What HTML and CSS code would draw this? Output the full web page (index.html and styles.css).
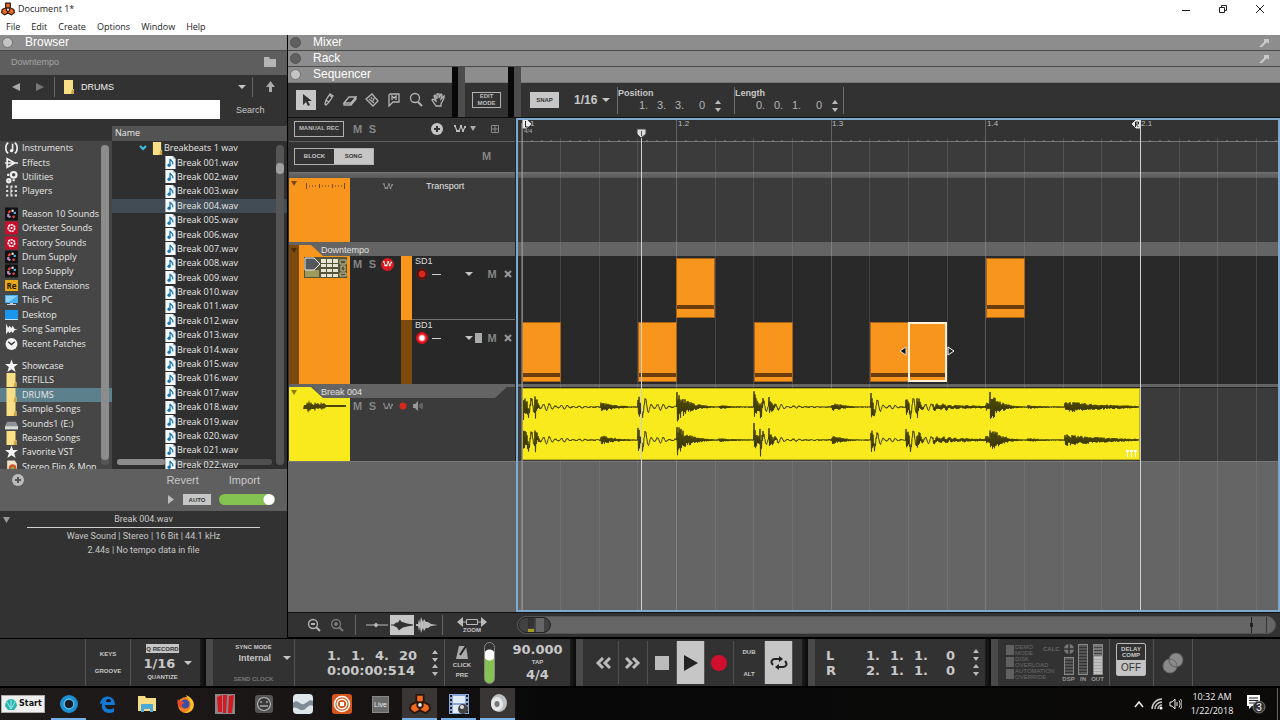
FILE: index.html
```html
<!DOCTYPE html>
<html lang="en">
<head>
<meta charset="utf-8">
<title>Document 1*</title>
<link rel="stylesheet" href="styles.css">
</head>
<body>
<svg class="defs" aria-hidden="true">
  <symbol id="logo" viewBox="0 0 24 24"><g fill="#f26a22" stroke="#2a1710" stroke-width="2"><path d="M8 2h8v7l-4 3-4-3z"/><path d="M2 13l6-3 5 4-1 5-6 3-5-4z"/><path d="M22 13l-6-3-5 4 1 5 6 3 5-4z"/></g><circle cx="12" cy="13" r="3" fill="#eee" stroke="#2a1710" stroke-width="2"/></symbol>
  <symbol id="folder" viewBox="0 0 12 14"><path d="M1 0h9v9h1v5H1z" fill="#f8df86"/><path d="M9 9l2 1v4H8z" fill="#c9a545"/></symbol>
  <symbol id="wav" viewBox="0 0 11 14"><path d="M0 0h8l3 3v11H0z" fill="#f4f8fb"/><path d="M8 0v3h3" fill="#a9bfd0"/><path d="M5 3c0 2 4 2 3 6M5 3v7" fill="none" stroke="#1476b8" stroke-width="1.4"/><circle cx="4" cy="10" r="1.8" fill="#1476b8"/></symbol>
  <symbol id="inst" viewBox="0 0 12 12"><path d="M3 1C0 3 0 9 3 11M9 1c3 2 3 8 0 10M7 2v7" fill="none" stroke="#eee" stroke-width="1.5"/><circle cx="6" cy="8.500" r="1.500" fill="#eee"/></symbol>
  <symbol id="fx" viewBox="0 0 12 12"><path d="M2 2l7 4-7 4zM0 6h12" fill="none" stroke="#eee" stroke-width="1.600"/></symbol>
  <symbol id="util" viewBox="0 0 12 12"><g fill="none" stroke="#eee" stroke-width="2"><circle cx="8" cy="4" r="2.600"/><circle cx="3.500" cy="9.500" r="1.500"/><path d="M2 4h2M7 9h2"/></g></symbol>
  <symbol id="play4" viewBox="0 0 12 12"><path d="M1 1h2v2H1zM5 1h2v2H5zM9 1h2v2H9zM1 5h2v2H1zM5 5h2v2H5zM9 5h2v2H9zM1 9h2v2H1zM5 9h2v2H5zM9 9h2v2H9zM5 3h1v8H5z" fill="#ddd"/></symbol>
  <symbol id="rsn" viewBox="0 0 12 12"><rect width="12" height="12" fill="#111"/><g fill="none" stroke-width="2"><path d="M3 5l2-2" stroke="#e8443c"/><path d="M6 3h2" stroke="#eee"/><path d="M9 4v2" stroke="#5bb4e8"/><path d="M9 8L7 9" stroke="#e8443c"/><path d="M3 6v2l2 1" stroke="#b98cd0"/></g></symbol>
  <symbol id="red" viewBox="0 0 12 12"><rect width="12" height="12" fill="#c8102e"/><circle cx="6" cy="6" r="3" fill="none" stroke="#fff" stroke-width="1.500" stroke-dasharray="2 .6"/><circle cx="6" cy="6" r="1" fill="#fff"/></symbol>
  <symbol id="pc" viewBox="0 0 13 12"><path d="M0 1h13v8H0z" fill="#43b0ef"/><path d="M1 2h11L4 8H1z" fill="#8cd2fa"/><path d="M5 9h3v1h3v1H2v-1h3z" fill="#ccd"/></symbol>
  <symbol id="desk" viewBox="0 0 13 12"><path d="M0 1h13v10H0z" fill="#1a96f0"/><path d="M0 10h13v1H0z" fill="#bfe3ff"/></symbol>
  <symbol id="smp" viewBox="0 0 12 12"><path d="M1 1l2 4 1-2 2 2 1-2 2 3 3 0-3 1-2 3-1-2-2 2-1-2-2 3z" fill="#eee"/></symbol>
  <symbol id="clk" viewBox="0 0 12 12"><circle cx="6" cy="6" r="5.500" fill="#f2f2f2"/><path d="M3 4l3 2.500L9 4" fill="none" stroke="#333" stroke-width="1.300"/></symbol>
  <symbol id="star" viewBox="0 0 12 12"><path d="M6 0l1.500 4.200H12L8.400 7l1.400 4.600L6 9l-3.800 2.600L3.600 7 0 4.200h4.500z" fill="#f4f4f4"/></symbol>
  <symbol id="drive" viewBox="0 0 12 12"><path d="M2 4h8l2 4H0z" fill="#8f9296"/><path d="M0 8h12v3H0z" fill="#d8dadc"/></symbol>
  <symbol id="doc" viewBox="0 0 12 12"><path d="M2 0h7l2 3v9H2z" fill="#f0e4c8"/><circle cx="7" cy="7" r="3.500" fill="#d4552c"/><circle cx="7" cy="7" r="1.500" fill="#7cb342"/></symbol>
  <symbol id="auto" viewBox="0 0 12 10"><path d="M1 2l2 5M5 7l2-5 2 5 2-4" fill="none" stroke="currentColor" stroke-width="1.200"/><path d="M0 1h2v2H0zM2 6h2v2H2zM4 6h2v2H4zM6 1h2v2H6zM8 6h2v2H8zM10 2h2v2h-2z" fill="currentColor"/></symbol>
  <symbol id="ud" viewBox="0 0 8 14"><path d="M4 1l3 4H1zM4 13l3-4H1z" fill="#bbb"/></symbol>
  <symbol id="pop" viewBox="0 0 12 10"><path d="M6 1h5v5L9 4 4 9H1l5-5z" fill="#c9c9c9"/></symbol>
</svg>

<header class="titlebar">
  <div class="title"><svg width="14" height="14"><use href="#logo"/></svg><span>Document 1*</span></div>
  <div class="winctl">
    <button aria-label="Minimize"><svg width="10" height="10"><path d="M1 6.500h8" stroke="#222"/></svg></button>
    <button aria-label="Restore"><svg width="10" height="10" fill="none" stroke="#222"><path d="M1.500 3.500h5v5h-5zM3.500 3V1.500h5v5H7"/></svg></button>
    <button aria-label="Close"><svg width="10" height="10"><path d="M1 1l8 8M9 1L1 9" stroke="#222"/></svg></button>
  </div>
</header>
<nav class="menu"><button>File</button><button>Edit</button><button>Create</button><button>Options</button><button>Window</button><button>Help</button></nav>

<main class="work">
  <aside class="browser">
    <div class="panelhead"><i class="knob on"></i><h2>Browser</h2></div>
    <div class="crumb"><span>Downtempo</span><svg width="14" height="12"><path d="M1 1h5l1 2h6v8H1z" fill="#b5b5b5"/></svg></div>
    <div class="nav">
      <button aria-label="Back"><svg width="9" height="10"><path d="M8 1v8L0 5z" fill="#aaa"/></svg></button>
      <button aria-label="Forward"><svg width="9" height="10"><path d="M1 1v8l8-4z" fill="#777"/></svg></button>
      <i class="vr"></i>
      <svg width="12" height="14"><use href="#folder"/></svg>
      <div class="pick grow"><select aria-label="Folder"><option>DRUMS</option></select></div>
      <i class="vr"></i>
      <button aria-label="Up one level"><svg width="9" height="12"><path d="M4.500 0L9 6H6v5H3V6H0z" fill="#aaa"/></svg></button>
    </div>
    <div class="search"><input id="q" type="text"><label for="q">Search</label></div>
    <div class="lists">
      <div class="places">
        <div class="placelist">
          <ul class="g4"><li><svg><use href="#inst"/></svg>Instruments</li><li><svg><use href="#fx"/></svg>Effects</li><li><svg><use href="#util"/></svg>Utilities</li><li><svg><use href="#play4"/></svg>Players</li></ul>
          <ul class="g10"><li><svg><use href="#rsn"/></svg>Reason 10 Sounds</li><li><svg><use href="#red"/></svg>Orkester Sounds</li><li><svg><use href="#red"/></svg>Factory Sounds</li><li><svg><use href="#rsn"/></svg>Drum Supply</li><li><svg><use href="#rsn"/></svg>Loop Supply</li><li><b class="re">Re</b>Rack Extensions</li><li><svg><use href="#pc"/></svg>This PC</li><li><svg><use href="#desk"/></svg>Desktop</li><li><svg><use href="#smp"/></svg>Song Samples</li><li><svg><use href="#clk"/></svg>Recent Patches</li></ul>
          <ul class="g8"><li><svg><use href="#star"/></svg>Showcase</li><li><svg><use href="#folder"/></svg>REFILLS</li><li class="sel"><svg><use href="#folder"/></svg>DRUMS</li><li><svg><use href="#folder"/></svg>Sample Songs</li><li><svg><use href="#drive"/></svg>Sounds1 (E:)</li><li><svg><use href="#folder"/></svg>Reason Songs</li><li><svg><use href="#star"/></svg>Favorite VST</li><li><svg><use href="#doc"/></svg>Stereo Flip &amp; Mon</li></ul>
        </div>
        <div class="vbar"><i class="full"></i></div>
      </div>
      <div class="files">
        <div class="colhead">Name</div>
        <div class="filebody">
          <ul class="filelist" id="files">
            <li class="dir"><svg class="chev" width="8" height="6"><path d="M1 1l3 3 3-3" fill="none" stroke="#3cc1e6" stroke-width="2"/></svg><svg><use href="#folder"/></svg>Breakbeats 1 wav</li>
          </ul>
          <div class="vbar"><i class="short"></i></div>
          <div class="hbar"><i></i></div>
        </div>
      </div>
    </div>
    <div class="audition">
      <div class="arow"><button class="plus" aria-label="Add"><svg width="12" height="12"><circle cx="6" cy="6" r="6" fill="#bbb"/><path d="M6 3v6M3 6h6" stroke="#555" stroke-width="2"/></svg></button><span class="grow"></span><button class="rev">Revert</button><button class="imp">Import</button></div>
      <div class="arow"><span class="grow"></span><button aria-label="Preview"><svg width="8" height="9"><path d="M1 0v9l6-4.500z" fill="#bbb"/></svg></button><button class="lit auto">AUTO</button><input type="checkbox" class="toggle" checked aria-label="Preview level"></div>
    </div>
    <div class="info">
      <svg class="tri" width="7" height="6"><path d="M0 0h7L3.500 6z" fill="#999"/></svg>
      <div class="infotext"><p class="nm">Break 004.wav</p><p>Wave Sound | Stereo | 16 Bit | 44.1 kHz</p><p>2.44s | No tempo data in file</p></div>
    </div>
  </aside>

  <section class="studio">
    <div class="panelhead"><i class="knob"></i><h2>Mixer</h2><svg width="12" height="10"><use href="#pop"/></svg></div>
    <div class="panelhead"><i class="knob"></i><h2>Rack</h2><svg width="12" height="10"><use href="#pop"/></svg></div>
    <div class="seqtop">
      <div class="sec s1">
        <div class="panelhead"><i class="knob on"></i><h2>Sequencer</h2></div>
        <div class="tools">
          <button class="lit" aria-label="Select"><svg width="20" height="20"><path d="M7 4v11l3-3 2 4 2-1-2-4h4z" fill="#333"/></svg></button>
          <button aria-label="Pencil"><svg width="20" height="20"><path d="M7 14l1-4 4-6 3 2-4 6-3 3zM8 10l3 2M11 5l3 2" class="ln"/></svg></button>
          <button aria-label="Eraser"><svg width="20" height="20"><path d="M4 13l5-6h7l-5 6zM4 13v2h7l5-6V7M11 13v2" class="ln"/></svg></button>
          <button aria-label="Razor"><svg width="20" height="20"><path d="M4 9l6-5 6 7-5 5zM7 9l5 4M9 7l1 2M12 8l-1 3" class="ln"/></svg></button>
          <button aria-label="Mute"><svg width="20" height="20"><path d="M6 4h9v8H9l-4 4V5z" class="ln"/><path d="M8 10V6l2 2 2-2v4" class="ln"/></svg></button>
          <button aria-label="Magnify"><svg width="20" height="20"><circle cx="9" cy="8" r="4.500" class="ln"/><path d="M12 12l4 4" class="ln2"/></svg></button>
          <button aria-label="Hand"><svg width="20" height="20"><path d="M8 16l-4-6 1-1 3 2-2-5 1-1 2 4V4h2v4l2-4 1 1-1 4 3-3v2l-3 6v2z" class="ln"/></svg></button>
        </div>
      </div>
      <div class="sec s2"><div class="panelhead"></div><div class="tools"><button class="outl">EDIT<br>MODE</button></div></div>
      <div class="sec s3"><div class="panelhead"></div>
        <div class="tools snaprow">
          <button class="lit snap">SNAP</button>
          <div class="pick snapsel"><select aria-label="Snap value"><option>1/16</option></select></div>
          <div class="field"><b>Position</b><div class="nums"><span>1.</span><span>3.</span><span>3.</span><span>0</span><svg width="8" height="14"><use href="#ud"/></svg></div></div>
          <div class="field"><b>Length</b><div class="nums"><span>0.</span><span>0.</span><span>1.</span><span>0</span><svg width="8" height="14"><use href="#ud"/></svg></div></div>
          <i class="vr tall"></i>
        </div>
      </div>
    </div>

    <div class="seq">
      <div class="heads">
        <div class="h-ruler"><button class="outl man">MANUAL REC</button><button class="ms">M</button><button class="ms">S</button><span class="grow"></span>
          <svg width="12" height="12"><circle cx="6" cy="6" r="6" fill="#c4c4c4"/><path d="M6 3v6M3 6h6" stroke="#333" stroke-width="2"/></svg>
          <svg class="au lg" width="12" height="10"><use href="#auto"/></svg><svg width="6" height="5"><path d="M0 0h6L3 5z" fill="#aaa"/></svg>
          <svg class="gr" width="8" height="8"><path d="M.5.500h7v7h-7zM4 0v8M0 4h8" fill="none" stroke="#888"/></svg></div>
        <div class="h-block"><div class="seg"><button>BLOCK</button><button class="lit">SONG</button></div><button class="ms">M</button></div>
        <div class="band6"></div>
        <div class="h-trans">
          <div class="swatch or"><svg width="60" height="16"><path d="M2 3h6L5 8z" fill="#7a4a10"/><path d="M17.500 5v6M30.500 6v4M43.500 6v4M55.500 5v6" stroke="#7a4a10"/><path d="M20.500 7v2M23.500 7v2M26.500 7v2M33.500 7v2M36.500 7v2M39.500 7v2M46.500 7v2M49.500 7v2M52.500 7v2" stroke="#a8681a"/></svg></div>
          <svg class="au" width="10" height="9"><use href="#auto"/></svg><span>Transport</span>
        </div>
        <div class="h-name"><i class="tabc"></i><span>Downtempo</span></div>
        <div class="h-down">
          <div class="strip"></div>
          <div class="swatch or dev"><svg width="43" height="21"><path fill="#55553c" d="M0 0h43v21H0z"/><path d="M1 13h14v7H1z" fill="#a09a5c"/><path d="M17 2h17v4H17zM17 7h17v3H17zM17 12h17v3H17zM17 17h17v3H17z" fill="#e6e6d2"/><path d="M22.500 1v19M28.500 1v19" stroke="#55553c"/><path d="M36 3h6v4h-6zM37 9h4v5h-4zM36 16h6v3h-6z" fill="none" stroke="#c5c396"/><path d="M1 1h9l6 6-6 6H1z" fill="#55585c" stroke="#eee"/></svg></div>
          <div class="msbox"><button class="ms">M</button><button class="ms">S</button><button class="autored" aria-label="Automation"><svg class="au" width="9" height="8"><use href="#auto"/></svg></button></div>
          <div class="lanes">
            <div class="lane"><i class="ls or"></i><div class="lb"><p>SD1</p><div class="lr"><i class="rec"></i><span class="dash"></span><i class="car"></i><i class="blk none"></i><button class="ms">M</button><button class="x" aria-label="Delete lane"><svg width="8" height="8"><path d="M1 1l6 6M7 1L1 7" stroke="#999" stroke-width="2"/></svg></button></div></div></div>
            <div class="lane"><i class="ls br"></i><div class="lb"><p>BD1</p><div class="lr"><i class="rec act"></i><span class="dash"></span><i class="car"></i><i class="blk"></i><button class="ms">M</button><button class="x" aria-label="Delete lane"><svg width="8" height="8"><path d="M1 1l6 6M7 1L1 7" stroke="#999" stroke-width="2"/></svg></button></div></div></div>
          </div>
        </div>
        <div class="h-aname"><i class="tabc"></i><span>Break 004</span></div>
        <div class="h-break">
          <div class="swatch ye"><svg width="60" height="20"><path d="M15 7h2l1-3 1 2 1-4 1 4 1-2 1 2 2 1 1-3 1 2 2-1 2 2 1-3 1 2 2-1 2 2h20v2H37l-2 2-1-1-1 2-2-2-2 1-2-1-1 3-1-2-3 0-1 2-1-1-1 3-1-4h-4z" fill="#4b4608"/></svg></div>
          <button class="ms">M</button><button class="ms">S</button><svg class="au" width="10" height="9"><use href="#auto"/></svg><i class="rec sm"></i>
          <svg width="11" height="10"><path d="M0 3h2l3-3v10L2 7H0z" fill="#999"/><path d="M7 3v4M9 2v6" stroke="#888"/></svg>
        </div>
        <div class="h-rest"></div>
      </div>
      <div class="arrange" id="arrange">
        <div class="r-ruler"></div><div class="r-block"></div><div class="band6"></div><div class="r-trans"></div><div class="r-name"></div><div class="r-down"></div><div class="r-gap"></div><div class="r-audio"></div><div class="r-rest"></div>
        <svg class="layer" id="grid"></svg>
        <div class="layer" id="clips">
          <i class="clip sd" style="left:158px"></i><i class="clip sd" style="left:468px"></i>
          <i class="clip bd" style="left:4px"></i><i class="clip bd" style="left:120px"></i><i class="clip bd" style="left:236px"></i><i class="clip bd" style="left:352px"></i><i class="clip bd chosen" style="left:390px"></i>
          <svg class="arrows" width="58" height="10"><path d="M8 1v8L2 5z" fill="#111" stroke="#ddd"/><path d="M50 1v8l6-4z" fill="#222" stroke="#fff"/></svg>
          <div class="audio"><svg id="wave" width="618" height="71"></svg><svg class="keys" width="11" height="8"><path d="M0 0h3v2H2v5H1V2H0zM4 0h3v2H6v5H5V2H4zM8 0h3v2h-1v5H9V2H8z" fill="#fff"/></svg></div>
        </div>
        <svg class="layer" id="marks"></svg>
        <span class="bar" style="left:160px">1.2</span><span class="bar" style="left:314px">1.3</span><span class="bar" style="left:469px">1.4</span><span class="bar" style="left:623px">2.1</span><span class="bar" style="left:12px">1</span><span class="sig">4/4</span>
      </div>
    </div>

    <div class="seqfoot">
      <div class="zooms">
        <button aria-label="Zoom out"><svg width="14" height="14"><circle cx="6" cy="6" r="4.500" class="ln"/><path d="M4 6h4M9 9l4 4" class="ln2"/></svg></button>
        <button aria-label="Zoom in" class="dim"><svg width="14" height="14"><circle cx="6" cy="6" r="4.500" class="ln"/><path d="M4 6h4M6 4v4M9 9l4 4" class="ln2"/></svg></button>
        <i class="vr"></i>
        <button aria-label="Small waveform"><svg width="22" height="18"><path d="M0 8.500h8l2-2 2 2h10v1H12l-2 2-2-2H0z" fill="#bbb"/></svg></button>
        <button class="lit" aria-label="Medium waveform"><svg width="24" height="18"><path d="M1 8.500h3l2-2 2 0 2-3 1 2 3 1 3 1 6 1v1l-6 1-4 1-3 2-1 1-2-3-2-1-2-1H1z" fill="#333"/></svg></button>
        <button aria-label="Large waveform"><svg width="22" height="18"><path d="M0 8l2 0 1-5 1 4 1-6 2 5 1-3 2 3 2 0 3 2 7 1-7 1-3 2-2 0-2 3-1-3-2 5-1-6-1 4-1-5-2 0z" fill="#bbb"/></svg></button>
        <i class="vr"></i>
        <button class="zm"><svg width="30" height="10"><path d="M0 5l6-5v10zM30 5l-6-5v10z" fill="#bbb"/><path d="M9.500 2.500h11v5h-11zM6 5h3M21 5h3" fill="none" stroke="#bbb"/></svg>ZOOM</button>
      </div>
      <div class="overview"><i class="view"></i><i class="m1"></i><i class="m2"></i></div>
    </div>
  </section>
</main>

<footer class="transport">
  <div class="t-blank"></div>
  <div class="t-keys"><button>KEYS</button><button>GROOVE</button></div>
  <div class="t-quant"><button class="lit">Q RECORD</button><div class="pick big"><select aria-label="Quantize"><option>1/16</option></select></div><span>QUANTIZE</span></div>
  <i class="bump"></i>
  <div class="t-sync"><span>SYNC MODE</span><div class="pick"><select aria-label="Sync mode"><option>Internal</option></select></div><span class="off">SEND CLOCK</span></div>
  <div class="t-pos"><div class="digits"><div class="pos"><span>1.</span><span>1.</span><span>4.</span><span>20</span></div><div>0:00:00:514</div></div><div class="uds"><svg width="8" height="14"><use href="#ud"/></svg><svg width="8" height="14"><use href="#ud"/></svg></div></div>
  <div class="t-click"><button><svg width="12" height="15"><path d="M3 1h7l2 13H0z" fill="#aaa"/><path d="M4 10l6-9" stroke="#222" stroke-width="2"/></svg>CLICK</button><button>PRE</button></div>
  <input type="checkbox" class="vtoggle" checked aria-label="Click level">
  <div class="t-tempo"><b>90.000</b><span>TAP</span><b>4/4</b></div>
  <i class="bump"></i>
  <div class="t-ctl">
    <button aria-label="Rewind" class="w1"><svg width="16" height="12"><path d="M8 1L3 6l5 5M15 1l-5 5 5 5" class="ch"/></svg></button>
    <button aria-label="Fast forward"><svg width="16" height="12"><path d="M1 1l5 5-5 5M8 1l5 5-5 5" class="ch"/></svg></button>
    <button aria-label="Stop"><i class="stop"></i></button>
    <button aria-label="Play" class="lit"><svg width="14" height="16"><path d="M0 0v16l14-8z" fill="#222"/></svg></button>
    <button aria-label="Record"><i class="record"></i></button>
    <div class="dub"><button>DUB</button><button>ALT</button></div>
    <button aria-label="Loop" class="lit"><svg width="18" height="14" fill="none" stroke="#222" stroke-width="2"><path d="M3 9C0 6 2 3 5 3h7M15 5c3 3 1 6-2 6H6"/><path d="M9 0l4 3-4 3zM9 8l-4 3 4 3z" fill="#222" stroke="none"/></svg></button>
  </div>
  <i class="bump"></i>
  <div class="t-lr"><div class="lrrow"><b>L</b><span>1.</span><span>1.</span><span>1.</span><span>0</span><svg width="8" height="14"><use href="#ud"/></svg></div><div class="lrrow"><b>R</b><span>2.</span><span>1.</span><span>1.</span><span>0</span><svg width="8" height="14"><use href="#ud"/></svg></div></div>
  <i class="bump"></i>
  <div class="t-meters">
    <div class="warns"><p>DEMO<br>MODE</p><p>DISK<br>OVERLOAD</p><p>AUTOMATION<br>OVERRIDE</p></div>
    <span class="calc">CALC</span>
    <div class="meter"><svg width="10" height="10"><circle cx="5" cy="5" r="5" fill="#777"/><path d="M5 0v10M0 5h10" stroke="#333" stroke-width="1.500"/></svg><i class="leds s"></i>DSP</div>
    <div class="meter"><i class="leds"></i>IN</div>
    <div class="meter"><i class="leds hot"></i>OUT</div>
  </div>
  <div class="t-delay"><button><span>DELAY<br>COMP</span><b>OFF</b></button></div>
  <div class="t-ovl"><svg width="22" height="22"><circle cx="8" cy="14" r="7" fill="#8a8a8a"/><circle cx="14" cy="8" r="7" fill="#8a8a8a" stroke="#5a5a5a"/><circle cx="8" cy="14" r="7" fill="none" stroke="#666"/></svg></div>
</footer>

<footer class="taskbar">
  <button class="start"><svg width="14" height="14"><path d="M1 9a6 7 0 0 1 12 0l-3 4H4z" fill="#2bb5b0"/><path d="M7 12V3M7 12L3 5M7 12l4-7" stroke="#9fe8e0"/></svg>Start</button>
  <div class="apps">
    <button class="run" aria-label="Browser"><svg width="20" height="20"><circle cx="10" cy="10" r="6.500" fill="none" stroke="#1c8fd0" stroke-width="5"/><circle cx="10" cy="10" r="5" fill="none" stroke="#6cc6f0"/></svg></button>
    <button aria-label="Edge"><svg width="20" height="20"><path d="M2 10C3 0 17 0 17 11H7c0 5 6 5 9 3v4C9 21 3 17 4 11c1-4 6-6 7-2H7" fill="#1178d4"/><path d="M8 8h5c0-4-5-4-5 0z" fill="#111"/></svg></button>
    <button aria-label="Explorer"><svg width="20" height="18"><path d="M1 1h7l1 2h10v13H1z" fill="#f7dc86"/><path d="M4 9h12v8h-3v-3H7v3H4z" fill="#49a9d8"/></svg></button>
    <button aria-label="Firefox"><svg width="20" height="20"><circle cx="10" cy="11" r="8" fill="#f0821e"/><path d="M10 1c5 2 9 7 7 12-1 4-5 6-9 6 6-2 8-7 6-11-1-3-3-4-4-7z" fill="#fbc52c"/><circle cx="9" cy="10" r="4.500" fill="#3b4ea8"/><path d="M2 5c2 3 5 2 7 4-4 0-4 4-1 5-5 1-8-4-6-9z" fill="#e8482c"/></svg></button>
    <button aria-label="Studio"><svg width="20" height="20"><path fill="#8d8587" d="M0 0h20v20H0z"/><path d="M2 3l5-2v17H3zM8 1h4l-1 18H8zM14 2l5-1-2 18h-4z" fill="#d11a24"/></svg></button>
    <button aria-label="Outlet"><svg width="20" height="20"><rect width="18" height="18" x="1" y="1" rx="3" fill="#555"/><circle cx="10" cy="10" r="6.500" fill="#3a3a3a" stroke="#bbb" stroke-width="1.200"/><path d="M6 8h2M12 8h2M6 12h8" stroke="#aaa" stroke-width="1.500"/></svg></button>
    <button aria-label="Wave"><svg width="20" height="20"><rect width="20" height="20" rx="4" fill="#dfe6ea"/><path d="M0 9c5-5 7 3 11 1s6-5 9-3v5c-4-3-6 3-10 4s-6-4-10-2z" fill="#7d8c97"/></svg></button>
    <button aria-label="Target"><svg width="20" height="20"><rect width="20" height="20" rx="3" fill="#d4561c"/><g fill="none" stroke="#fff" stroke-width="1.500"><circle cx="10" cy="10" r="7.500"/><circle cx="10" cy="10" r="4.800"/></g><path d="M8 8h4v4H8z" fill="#fff"/></svg></button>
    <button aria-label="Live"><span class="live">Live</span></button>
    <button class="run cur" aria-label="Reason"><svg width="22" height="22"><use href="#logo"/></svg></button>
    <button class="run" aria-label="Capture"><svg width="22" height="20"><path fill="#8ba6d8" d="M1 0h20v20H1z"/><path d="M5 2h12v7H5zM5 11h12v8H5z" fill="#e2ebf8"/><path d="M3 1v18M19 1v18" stroke="#223" stroke-width="2" stroke-dasharray="2 2"/><circle cx="15" cy="15" r="5" fill="#444"/><circle cx="14" cy="13" r="2" fill="#ddd"/></svg></button>
    <button class="run cur" aria-label="Sound"><svg width="20" height="20"><ellipse cx="11" cy="9" rx="8" ry="9" fill="#bcc0c3"/><ellipse cx="9" cy="10" rx="6" ry="7" fill="#e4e6e7"/><ellipse cx="9" cy="10" rx="2.500" ry="3" fill="#777"/></svg></button>
  </div>
  <div class="tray">
    <svg width="12" height="8"><path d="M2 7l4-5 4 5" fill="none" stroke="#eee" stroke-width="1.500"/></svg>
    <svg width="12" height="12"><path d="M1 11A10 10 0 0 1 11 1M4 11a7 7 0 0 1 7-7M7 11a4 4 0 0 1 4-4" fill="none" stroke="#ccc" stroke-width="1.500"/><circle cx="10" cy="10" r="1.500" fill="#fff"/></svg>
    <svg width="13" height="12"><path d="M1 4h2l3-3v10L3 8H1z" fill="none" stroke="#eee"/><path d="M8 4v4M10 2.500c1.500 2 1.500 5 0 7M11.500 1c2 3 2 7 0 10" fill="none" stroke="#eee"/></svg>
    <div class="clock">10:32 AM<br>1/22/2018</div>
    <svg class="note" width="20" height="20"><path d="M1 1h13v11H6l-3 3v-3H1z" fill="#fff"/><path d="M3 4h9M3 6.500h9M3 9h6" stroke="#222"/><circle cx="13" cy="13" r="6" fill="#333" stroke="#777"/><text x="13" y="17" text-anchor="middle" class="badge">3</text></svg>
    <i class="peek"></i>
  </div>
</footer>
<script src="app.js"></script>
</body>
</html>
```

FILE: styles.css
```css
* { box-sizing: border-box; }
body { margin: 0; height: 100vh; display: flex; flex-direction: column; overflow: hidden; background: #000; color: #c8c8c8; font: 9px/12px "Liberation Sans", Arial, sans-serif; }
button, select, input { font: inherit; color: inherit; background: none; border: 0; border-radius: 0; padding: 0; margin: 0; }
button { display: flex; align-items: center; justify-content: center; flex: none; }
h2, p, ul { margin: 0; padding: 0; list-style: none; font-weight: normal; }
svg { display: block; flex: none; }
i { flex: none; }
.defs { position: absolute; width: 0; height: 0; }
.grow { flex: 1; min-width: 0; }
.lit { background: #c6c6c6; color: #333; }
.outl { border: 1px solid #b0b0b0; font-weight: bold; font-size: 6px; line-height: 7px; color: #bbb; }
.ln { fill: none; stroke: #b4b4b4; stroke-width: 1.3; }
.ln2 { fill: none; stroke: #b4b4b4; stroke-width: 2; }
.ch { fill: none; stroke: #bbb; stroke-width: 3; }
.vr { width: 1px; height: 20px; background: #666; }

.titlebar { height: 18px; flex: none; background: #fff; color: #222; display: flex; justify-content: space-between; font: 9px/18px "Open Sans", sans-serif; }
.title { display: flex; align-items: center; gap: 3px; padding-left: 1px; }
.winctl { display: flex; gap: 27px; padding-right: 15px; }
.menu { height: 17px; flex: none; background: #fff; color: #222; display: flex; gap: 11px; padding-left: 6px; font: 9px/17px "Open Sans", sans-serif; }

.work { flex: 1; min-height: 0; display: flex; }
.browser { width: 287px; flex: none; display: flex; flex-direction: column; background: #323232; margin-right: 1px; }
.panelhead { height: 16px; flex: none; display: flex; align-items: center; gap: 12px; padding: 0 10px 0 2px; background: #8d8d8d; border-bottom: 1px solid #4a4a4a; }
.panelhead h2 { font-size: 12px; line-height: 15px; color: #fff; flex: 1; }
.knob { width: 11px; height: 11px; border-radius: 50%; background: #606060; border: 1px solid #555; }
.knob.on { background: #c4c4c4; border-color: #707070; }
.crumb { height: 24px; flex: none; background: #5e5e5e; color: #a5a5a5; display: flex; align-items: center; justify-content: space-between; padding: 0 10px 2px 11px; }
.nav { height: 24px; flex: none; display: flex; align-items: center; gap: 6px; padding: 0 12px; color: #f0f0f0; }
.nav > button:nth-child(2) { margin: 0 4px 0 8px; }
.nav > button:last-child { margin-left: 5px; }
.nav .vr { margin-right: 2px; }
.pick { display: flex; align-items: center; }
.pick select { appearance: none; flex: 1; min-width: 0; outline: 0; }
.pick::after, .car { content: ""; border: 4px solid transparent; border-top-color: #c4c4c4; border-bottom: 0; }
.search { flex: none; height: 27px; padding: 1px 12px 7px; display: flex; align-items: center; gap: 16px; }
.search input { width: 208px; height: 19px; background: #fff; color: #222; }
.lists { flex: 1; min-height: 0; display: flex; color: #e8e8e8; font: 9px/14px "Open Sans", sans-serif; }
.places { width: 112px; flex: none; margin-top: 15px; background: #464646; display: flex; overflow: hidden; }
.placelist { flex: 1; height: 333px; display: flex; flex-direction: column; gap: 8px; min-width: 0; }
.placelist ul { display: flex; flex-direction: column; flex-basis: 0; }
.g4 { flex-grow: 4; } .g10 { flex-grow: 10; } .g8 { flex-grow: 8; }
.placelist li, .filelist li { flex: 1; display: flex; align-items: center; white-space: nowrap; }
.placelist li { gap: 4px; padding-left: 5px; width: 112px; }
.placelist li svg { width: 13px; height: 14px; margin: -1px 0; }
.re { width: 13px; height: 11px; background: #e8a818; color: #2a1c00; font-size: 8px; line-height: 11px; text-align: center; flex: none; }
.placelist .sel { background: #5d808d; }
.vbar { width: 8px; flex: none; background: #555; border-radius: 4px; position: relative; margin: 4px 3px 4px 0; }
.vbar i { position: absolute; left: 0; right: 0; border-radius: 4px; background: #8c8c8c; }
.vbar .full { top: 0; bottom: 5px; } .vbar .short { top: 18px; height: 11px; background: #a0a0a0; }
.files { flex: 1; display: flex; flex-direction: column; min-width: 0; }
.colhead { height: 15px; flex: none; background: #535353; padding-left: 3px; }
.filebody { flex: 1; min-height: 0; display: flex; position: relative; overflow: hidden; background: #2f2f2f; }
.filelist { flex: 1; height: 331px; display: flex; flex-direction: column; }
.filelist li { padding-left: 53px; gap: 1px; margin-right: -11px; }
.filelist li.dir { padding-left: 27px; }
.filelist li.cur { background: #414c54; }
.filelist li svg { width: 11px; height: 13px; }
.filelist .chev { width: 8px; height: 6px; margin-right: 4px; }
.hbar { position: absolute; left: 5px; width: 155px; bottom: 4px; height: 6px; border-radius: 3px; background: #505050; z-index: -1; }
.filebody { isolation: isolate; }
.hbar i { display: block; width: 48px; height: 6px; border-radius: 3px; background: #8c8c8c; }
.audition { height: 42px; flex: none; background: #5f5f5f; padding: 2px 12px 0; display: flex; flex-direction: column; gap: 3px; }
.arow { display: flex; align-items: center; height: 17px; gap: 8px; font-size: 11px; }
.rev { margin-right: 22px; } .imp { margin-right: 15px; }
.auto { width: 28px; height: 11px; font-size: 6px; font-weight: bold; }
.toggle { appearance: none; width: 56px; height: 11px; border-radius: 6px; background: radial-gradient(circle at 50px 50%, #fff 5px, transparent 6px), #84c252; }
.info { height: 127px; flex: none; padding: 2px 27px 0 3px; display: flex; font-family: Roboto, sans-serif; }
.tri { margin-top: 4px; }
.infotext { flex: 1; text-align: center; margin-left: 17px; line-height: 13px; }
.infotext p { padding-top: 1px; }
.infotext .nm { border-bottom: 1px solid #d0d0d0; padding: 0 0 1px; margin-bottom: 1px; }

.studio { flex: 1; min-width: 0; display: flex; flex-direction: column; background: #646464; }
.seqtop { display: flex; height: 51px; flex: none; background: #080808; border-bottom: 1px solid #111; }
.sec { display: flex; flex-direction: column; }
.sec .panelhead { border-bottom-color: #777; }
.sec + .sec { border-left: 7px solid #4c4c4c; margin-left: 6px; }
.s1 { width: 164px; } .s2 { width: 50px; } .s3 { flex: 1; min-width: 0; }
.tools { flex: 1; background: #323232; display: flex; align-items: center; padding-left: 8px; gap: 2px; }
.tools > button { height: 20px; width: 20px; }
.s2 .tools { padding: 0; justify-content: center; }
.s2 .outl { width: 29px; height: 16px; }
.snaprow { gap: 0; padding-left: 9px; }
.tools .snap { width: 29px; height: 16px; font-size: 6px; font-weight: bold; }
.snapsel { width: 36px; margin: 0 7px 0 15px; font-size: 12px; font-weight: bold; }
.field { border-left: 1px solid #707070; width: 117px; height: 27px; line-height: 12px; }
.field b { display: block; }
.nums { display: grid; grid-template-columns: 18px 18px 18px 18px 8px; justify-content: end; margin-right: 15px; align-items: center; font-size: 11px; line-height: 13px; color: #b4b4b4; }
.nums span:nth-child(4) { padding-left: 6px; }
.nums svg { margin-left: 3px; }
.tall { height: 27px; margin-left: -8px; background: #707070; }

.seq { flex: 1; min-height: 0; display: flex; }
.heads { width: 228px; flex: none; display: flex; flex-direction: column; background: #323232; border-right: 1px solid #222; padding-left: 1px; }
.ms { width: 15px; height: 14px; font-size: 11px; font-weight: bold; color: #858585; }
.h-ruler { height: 24px; flex: none; display: flex; align-items: center; padding: 0 16px 2px 5px; border-bottom: 1px solid #606060; }
.man { width: 50px; height: 16px; margin-right: 6px; }
.au { color: #8a8a8a; } .lg { color: #bbb; margin: 0 4px 0 11px; } .gr { margin-left: 15px; }
.h-block { height: 30px; flex: none; display: flex; align-items: center; justify-content: space-between; padding: 0 21px 2px 5px; }
.seg { display: flex; border: 1px solid #b0b0b0; font-size: 6px; font-weight: bold; }
.seg button { width: 39px; height: 15px; }
.band6 { height: 6px; flex: none; background: linear-gradient(#707070 1px, #626262 2px 4px, #555); }
.h-trans { height: 64px; flex: none; background: #3b3b3b; display: flex; }
.h-trans .au { margin: 4px 33px 0 33px; } .h-trans span { line-height: 16px; color: #e2e2e2; }
.swatch { width: 61px; flex: none; }
.or { background: #f7951d; } .ye { background: #f8ea1d; } .br { background: #7d4a0e; }
.h-name, .h-aname { height: 14px; flex: none; background: #646464; display: flex; color: #e2e2e2; line-height: 16px; }
.tabc { width: 34px; height: 14px; background: linear-gradient(90deg, #7d4a0e 10px, #f7951d 10px); clip-path: polygon(0 3px, 22px 3px, 34px 14px, 0 14px); margin-right: -2px; position: relative; }
.tabc::after { content: ""; position: absolute; left: 2px; top: 6px; border: 3px solid transparent; border-top: 5px solid #4a2c08; border-bottom: 0; }
.h-aname { background: linear-gradient(#646464 3px, #3b3b3b 3px); position: relative; }
.h-aname::before { content: ""; position: absolute; left: 22px; top: 2px; width: 197px; height: 12px; background: #646464; clip-path: polygon(0 0, 197px 0, 184px 12px, 12px 12px); }
.h-aname .tabc { background: #f8ea1d; } .h-aname .tabc::after { border-top-color: #8a7d10; } .h-aname span { position: relative; }
.h-down { height: 128px; flex: none; background: #282828; display: flex; }
.strip { width: 10px; background: #7d4a0e; flex: none; }
.dev { width: 51px; padding: 1px 0 0 5px; }
.msbox { display: flex; width: 51px; height: 16px; align-items: center; }
.autored { width: 13px; height: 13px; margin-left: 1px; border-radius: 50%; background: #d81b20; }
.autored .au { color: #fff; }
.lanes { flex: 1; display: flex; flex-direction: column; min-width: 0; }
.lane { flex: 1; display: flex; }
.lane + .lane .lb { border-top: 1px solid #707070; margin-top: -1px; }
.ls { width: 11px; }
.lb { flex: 1; padding-left: 3px; color: #ddd; line-height: 11px; }
.lr { display: flex; align-items: center; gap: 4px; padding-left: 1px; }
.rec { width: 12px; height: 12px; border-radius: 50%; background: radial-gradient(#d8281e 3px, #3c1414 4px); border: 1px solid #6d1a1a; }
.rec.act { background: radial-gradient(#fff 2px, #e8101a 4px); border-color: #e8101a; }
.rec.sm { border: 0; background: radial-gradient(#d8281e 3px, transparent 4px); }
.dash { width: 9px; height: 1px; background: #ccc; margin-right: 20px; }
.blk { width: 7px; height: 10px; background: #aaa; margin: 0 -2px; } .blk.none { background: none; }
.lr .ms { width: 12px; margin: 0 2px 0 2px; }
.h-break { height: 63px; flex: none; background: #3b3b3b; display: flex; }
.h-break .ms { height: 16px; } .h-break > .au { margin: 4px 4px 0 3px; } .h-break .rec { margin: 2px 4px 0 0; } .h-break > svg:last-child { margin-top: 3px; }
.h-rest { flex: 1; background: #656565; border-top: 1px solid #777; margin: 0 -1px; }

.arrange { flex: 1; min-width: 0; border: 2px solid #7faad0; position: relative; overflow: hidden; display: flex; flex-direction: column; }
.r-ruler { height: 22px; background: #333; border-bottom: 1px solid #777; flex: none; }
.r-block { height: 30px; background: #3b3b3b; flex: none; }
.r-trans { height: 64px; background: #3b3b3b; flex: none; }
.r-name { height: 14px; background: #646464; flex: none; }
.r-down { height: 128px; background: #292929; flex: none; }
.r-gap { height: 4px; background: linear-gradient(#646464 3px, #222 3px); flex: none; }
.r-audio { height: 73px; background: #3b3b3b; flex: none; }
.r-rest { flex: 1; background: #656565; border-top: 1px solid #777; }
.layer { position: absolute; left: 0; top: 0; width: 100%; height: 100%; }
.clip { position: absolute; width: 39px; height: 60px; border: 1px solid #a8641a; background: linear-gradient(#f7951d 50px, #6b3d0c 50px 54px, #f7951d 54px); }
.clip.sd { top: 138px; background: linear-gradient(#f7951d 46px, #6b3d0c 46px 50px, #f7951d 50px); }
.clip.bd { top: 202px; }
.clip.chosen { border: 2px solid #fff0d8; background: linear-gradient(#f7951d 49px, #6b3d0c 49px 53px, #f7951d 53px); }
.arrows { position: absolute; left: 380px; top: 226px; }
.audio { position: absolute; left: 4px; top: 268px; width: 618px; height: 72px; background: #f8ea1d; border: 1px solid #b8ae20; }
.keys { position: absolute; right: 2px; bottom: 1px; }
.bar { position: absolute; top: 0; font-size: 8px; line-height: 8px; color: #bbb; }
.sig { position: absolute; left: 6px; top: 8px; font-size: 6px; line-height: 7px; color: #aaa; }

.seqfoot { height: 26px; flex: none; background: #323232; border-top: 1px solid #111; border-bottom: 1px solid #000; display: flex; align-items: center; padding-right: 4px; }
.zooms { width: 224px; flex: none; display: flex; align-items: center; padding-left: 19px; }
.zooms button { margin-right: 9px; }
.zooms .dim { opacity: 0.55; }
.zooms .vr { margin: 0 10px 0 2px; }
.zooms button:nth-of-type(n+3) { margin: 0 2px 0 0; }
.zooms .lit { height: 20px; }
.zooms button.zm { flex-direction: column; font-size: 6px; font-weight: bold; line-height: 7px; margin-left: 4px; }
.overview { flex: 1; height: 18px; border-radius: 9px; background: #666; margin-left: 5px; position: relative; border: 1px solid #555; }
.view { position: absolute; left: 0; top: 0; width: 33px; height: 16px; border-radius: 8px; background: linear-gradient(#333, #333) 9px 0/6px 10px no-repeat, linear-gradient(#a89d20, #a89d20) 9px 11px/6px 5px no-repeat, linear-gradient(#666, #666) 17px 0/8px 16px no-repeat, #424242; border: 1px solid #222; }
.m1 { position: absolute; right: 23px; top: 0; width: 1px; height: 16px; background: #222; }
.m1::after { content: ""; position: absolute; left: -1px; top: 6px; width: 3px; height: 4px; background: #222; }
.m2 { position: absolute; right: 8px; top: 0; width: 1px; height: 16px; background: #333; }

.transport { height: 50px; flex: none; background: #323232; border-top: 1px solid #000; border-bottom: 2px solid #000; display: flex; align-items: stretch; font-weight: bold; font-size: 6px; line-height: 8px; }
.transport > div { flex: none; }
.bump { width: 13px; background: linear-gradient(90deg, #1c1c1c, #0a0a0a 6px, #4a4a4a 6px); }
.t-blank { width: 85px; }
.t-keys { width: 46px; border: solid #555; border-width: 0 1px; display: flex; flex-direction: column; justify-content: center; gap: 9px; align-items: center; }
.t-quant { width: 69px; display: flex; flex-direction: column; align-items: center; padding-top: 5px; }
.t-quant button { width: 33px; height: 9px; }
.t-quant > span, .t-quant > button { margin-right: 6px; }
.big { width: 48px; margin: 1px 0 1px 4px; height: 18px; }
.big, .t-pos, .t-tempo b, .t-lr { font: bold 13px/15px "DejaVu Sans", sans-serif; }
.t-sync { width: 82px; border-right: 1px solid #555; display: flex; flex-direction: column; align-items: center; padding-top: 4px; }
.t-sync .pick { width: 52px; font-size: 9px; height: 12px; margin: 1px 0 11px 22px; }
.t-sync .off { color: #777; }
.t-pos { width: 150px; border-right: 1px solid #555; display: flex; justify-content: flex-end; align-items: center; gap: 14px; padding-right: 5px; }
.pos { display: grid; grid-template-columns: 24px 24px 24px 18px; justify-content: end; }
.uds { display: flex; flex-direction: column; }
.t-click { width: 34px; display: flex; flex-direction: column; align-items: center; padding-top: 6px; gap: 2px; }
.t-click button { flex-direction: column; gap: 1px; }
.vtoggle { appearance: none; width: 11px; height: 42px; margin: 3px 5px; border-radius: 6px; background: radial-gradient(circle at 50% 12px, #fff 5px, transparent 6px), linear-gradient(#333 12px, #84c252 12px); border: 1px solid #888; }
.t-tempo { width: 70px; display: flex; flex-direction: column; align-items: center; padding: 3px 0 0 5px; gap: 1px; }
.t-ctl { width: 219px; display: flex; padding: 2px 0; }
.t-ctl > button { width: 29px; border-right: 1px solid #505050; } .t-ctl > .w1 { width: 36px; padding-left: 5px; }
.t-ctl > .lit { width: 28px; border-right: 1px solid #555; }
.stop { width: 14px; height: 14px; background: #bbb; }
.record { width: 16px; height: 16px; border-radius: 50%; background: #d0102e; }
.dub { width: 31px; display: flex; flex-direction: column; justify-content: center; gap: 14px; align-items: center; border-right: 1px solid #505050; }
.t-lr { width: 170px; display: flex; flex-direction: column; justify-content: center; }
.lrrow { display: grid; grid-template-columns: 40px 24px 24px 32px 26px 8px; align-items: center; padding-left: 11px; }
.t-meters { width: 112px; border-right: 1px solid #555; display: flex; padding: 3px 6px 0 8px; gap: 4px; color: #999; position: relative; }
.warns { width: 53px; flex: none; padding-top: 2px; color: #6c6c6c; }
.warns p { display: flex; align-items: center; gap: 1px; line-height: 6px; height: 12px; }
.warns p::before { content: ""; width: 8px; height: 10px; background: #606060; flex: none; }
.calc { position: absolute; left: 45px; top: 6px; color: #666; }
.meter { display: flex; flex-direction: column; align-items: center; justify-content: flex-end; height: 41px; width: 11px; }
.meter svg { margin-bottom: 3px; }
.leds { width: 10px; height: 31px; border: 1px solid #888; background: repeating-linear-gradient(#555 0 2px, #333 2px 3px); flex: none; }
.leds.s { height: 18px; } .leds.hot { background: linear-gradient(#0000 11px, #fff8 11px), repeating-linear-gradient(#777 0 2px, #444 2px 3px); }
.t-delay { width: 44px; border-right: 1px solid #555; padding: 4px 6px; }
.t-delay button { width: 30px; flex-direction: column; border: 1px solid #bbb; border-radius: 2px; line-height: 6px; }
.t-delay span { padding: 2px 0; }
.t-delay b { width: 100%; background: #c4c4c4; color: #333; font-size: 10px; line-height: 15px; font-weight: normal; }
.t-ovl { width: 39px; border-right: 1px solid #555; display: flex; align-items: center; justify-content: center; }

.taskbar { height: 32px; flex: none; background: linear-gradient(90deg, #211c1c, #161212 440px, #080808 540px, #0c0b0a); display: flex; align-items: center; }
.start { width: 44px; height: 18px; margin-left: 1px; background: #efefef; border: 1px solid #aaa; color: #111; gap: 1px; font: bold 8px/12px "DejaVu Sans", sans-serif; }
.apps { display: flex; margin-left: 4px; flex: 1; align-self: stretch; }
.apps button { width: 35px; margin: 0 2px; border-bottom: 2px solid transparent; border-top: 2px solid transparent; }
.apps .run { border-bottom-color: #76b0e8; } .apps .cur { background: #3a3636; }
.live { width: 17px; height: 17px; background: #6a6a6a; color: #eee; font-size: 7px; line-height: 16px; text-align: center; border: 1px solid #888; }
.tray { display: flex; align-items: center; gap: 6px; align-self: stretch; color: #eee; padding-right: 2px; }
.clock { text-align: center; font: 9px/14px "Open Sans", sans-serif; margin-left: 2px; width: 44px; }
.note { margin-left: 6px; } .badge { fill: #fff; font-size: 10px; }
.peek { width: 1px; height: 32px; background: #666; margin-left: 5px; }
```

FILE: app.js
```js
const NS = "http://www.w3.org/2000/svg";
const START = 4, STEP = 154.6 / 4;

const list = document.getElementById("files");
for (let n = 1; n <= 22; n++) {
  const li = document.createElement("li");
  if (n === 4) li.className = "cur";
  li.innerHTML = '<svg><use href="#wav"/></svg>Break ' + String(n).padStart(3, "0") + ".wav";
  list.append(li);
}

function draw(svg, d, stroke, width, fill) {
  const p = document.createElementNS(NS, "path");
  p.setAttribute("d", d);
  p.setAttribute("fill", fill || "none");
  if (stroke) { p.setAttribute("stroke", stroke); p.setAttribute("stroke-width", width || 1); }
  svg.append(p);
}

const grid = document.getElementById("grid");
const width = document.getElementById("arrange").clientWidth;
let beats = "", sub = "", ticks = "";
for (let k = 0; START + k * STEP < width; k++) {
  const x = Math.floor(START + k * STEP) + 0.5;
  if (k % 4 === 0) beats += `M${x} 0V490`;
  else sub += `M${x} 18V490`;
  for (let t = 1; t < 4; t++) ticks += `M${Math.round(x + t * STEP / 4)} 20v2`;
}
draw(grid, sub, "rgba(150,150,150,.25)");
draw(grid, beats, "rgba(170,170,170,.4)");
draw(grid, ticks, "#888");

const marks = document.getElementById("marks");
draw(marks, "M4 3V490", "#9a9a9a", 1);
draw(marks, "M123.5 14V490M622.5 0V490", "#d0d0d0", 1);
draw(marks, "M119 9h9v5l-5 4-4-4z", "#444", 1, "#ddd");
draw(marks, "M123.500 11v5", "#555", 1);
draw(marks, "M5 0h4l4 4-4 4H5z", "#ddd", 1, "#eee");
draw(marks, "M7.500 1v6h3", "#222", 1);
draw(marks, "M622 0h-4l-4 4 4 4h4z", "#ddd", 1, "#eee");
draw(marks, "M617.500 7V2h3v2h-3l3 3", "#222", 1);

// Hits: start, level, decay length, and whether the tail rings or is noise
const hits = [
  [0, 15, 5, 0], [12, 15, 2, 0], [4, 8, 24, 1], [78, 5, 16, 0], [115, 16, 3, 0], [118, 10, 16, 1],
  [154, 16, 12, 0], [196, 2, 20, 0], [231, 19, 3, 0], [237, 16, 2, 0], [246, 10, 4, 0], [236, 7, 20, 1], [309, 5, 12, 0],
  [348, 15, 3, 0], [350, 9, 12, 1], [383, 16, 3, 0], [394, 14, 3, 0], [386, 10, 18, 1], [410, 3, 60, 0],
  [463, 5, 8, 0], [467, 16, 10, 0], [505, 2, 20, 0], [542, 6, 45, 0]
];
let seed = 7;
const rnd = () => (seed = (seed * 16807) % 2147483647) / 2147483647;
const wave = document.getElementById("wave");
for (const mid of [18, 51]) {
  let d = `M0 ${mid}`, side = 1;
  for (let x = 0; x < 616; x += 0.5) {
    let noise = 0.6, ring = 0;
    for (const [s, level, decay, tonal] of hits) {
      if (x < s) continue;
      const e = level * Math.exp(-(x - s) / decay);
      if (tonal) ring += e * Math.sin((x - s) * 1.05) * (0.7 + 0.4 * Math.sin((x - s) * 0.37));
      else noise = Math.max(noise, e);
    }
    side = -side;
    const y = Math.max(-17, Math.min(17, ring + side * noise * (0.4 + 0.6 * rnd())));
    d += `L${x} ${(mid + y).toFixed(1)}`;
  }
  draw(wave, d, "#3f3b08", 1);
}
```
